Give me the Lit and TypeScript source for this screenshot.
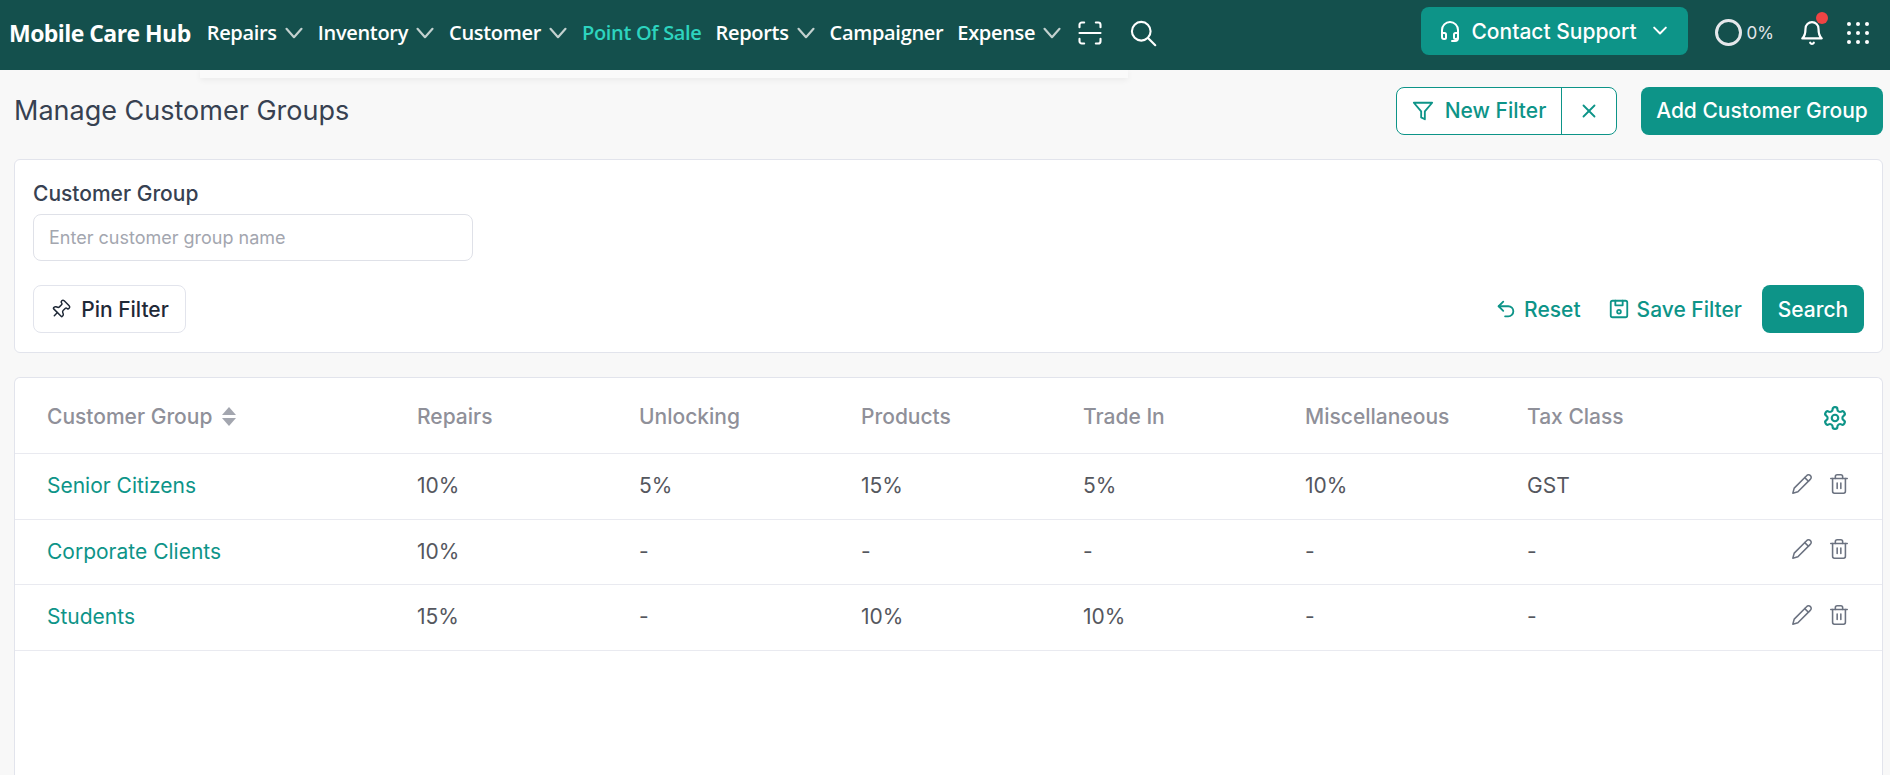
import { LitElement, html, css, svg } from "lit";
import { customElement } from "lit/decorators.js";

const ic = (cls: string, body: unknown, sw = 2) => html`<svg class=${cls} viewBox="0 0 24 24" fill="none" stroke="currentColor" stroke-width=${sw} stroke-linecap="round" stroke-linejoin="round">${body}</svg>`;
const chevron = svg`<path d="m5 8 7 7 7-7"/>`;
const navChevron = svg`<path d="m3 7 9 10 9-10"/>`;
const pencil = svg`<path d="M17 3a2.85 2.83 0 1 1 4 4L7.5 20.5 2 22l1.5-5.5Z"/><path d="m15 5 4 4"/>`;
const trash = svg`<path d="M3 6h18"/><path d="M19 6v14c0 1-1 2-2 2H7c-1 0-2-1-2-2V6"/><path d="M8 6V4c0-1 1-2 2-2h4c1 0 2 1 2 2v2"/><path d="M10 11v6"/><path d="M14 11v6"/>`;
const gear = svg`<path d="M12.22 2h-.44a2 2 0 0 0-2 2v.18a2 2 0 0 1-1 1.73l-.43.25a2 2 0 0 1-2 0l-.15-.08a2 2 0 0 0-2.73.73l-.22.38a2 2 0 0 0 .73 2.73l.15.1a2 2 0 0 1 1 1.72v.51a2 2 0 0 1-1 1.74l-.15.09a2 2 0 0 0-.73 2.73l.22.38a2 2 0 0 0 2.73.73l.15-.08a2 2 0 0 1 2 0l.43.25a2 2 0 0 1 1 1.73V20a2 2 0 0 0 2 2h.44a2 2 0 0 0 2-2v-.18a2 2 0 0 1 1-1.73l.43-.25a2 2 0 0 1 2 0l.15.08a2 2 0 0 0 2.73-.73l.22-.39a2 2 0 0 0-.73-2.73l-.15-.08a2 2 0 0 1-1-1.74v-.5a2 2 0 0 1 1-1.74l.15-.09a2 2 0 0 0 .73-2.73l-.22-.38a2 2 0 0 0-2.73-.73l-.15.08a2 2 0 0 1-2 0l-.43-.25a2 2 0 0 1-1-1.73V4a2 2 0 0 0-2-2z"/><circle cx="12" cy="12" r="3"/>`;

const NAV: [string, boolean, boolean?][] = [
  ["Repairs", true], ["Inventory", true], ["Customer", true], ["Point Of Sale", false, true],
  ["Reports", true], ["Campaigner", false], ["Expense", true],
];
const COLS = ["Repairs", "Unlocking", "Products", "Trade In", "Miscellaneous", "Tax Class"];
const ROWS = [
  ["Senior Citizens", "10%", "5%", "15%", "5%", "10%", "GST"],
  ["Corporate Clients", "10%", "-", "-", "-", "-", "-"],
  ["Students", "15%", "-", "10%", "10%", "-", "-"],
];

@customElement("app-root")
export class AppRoot extends LitElement {
  static styles = css`
    :host { display: flex; flex-direction: column; height: 775px; overflow: hidden; position: relative; background: #f8f8f8; font-family: Inter, "Liberation Sans", sans-serif; color: #374151; }
    * { box-sizing: border-box; }
    svg { display: block; flex: none; }
    .top { height: 70px; flex: none; background: #14504d; color: #fff; display: flex; align-items: center; padding: 0 21px 5px 9px; font-family: "Open Sans", "Noto Sans", sans-serif; position: relative; z-index: 2; }
    .logo { font-size: 23px; font-weight: 700; margin-right: 16px; letter-spacing: -0.55px; }
    .nav { display: flex; align-items: center; gap: 14px; font-size: 20px; font-weight: 600; letter-spacing: -0.32px; }
    .nav-item { display: flex; align-items: center; gap: 7px; white-space: nowrap; }
    .nav-item.on { color: #2dd4bf; }
    .ch { width: 20px; height: 20px; color: #c3d1cf; }
    .scan { width: 28px; height: 28px; }
    .srch { width: 28px; height: 28px; margin-left: 25px; }
    .right { margin-left: auto; display: flex; align-items: center; }
    .support { width: 267px; height: 48px; margin-bottom: 3px; border-radius: 8px; background: #0d9488; display: flex; align-items: center; justify-content: center; gap: 9px; font-size: 21px; font-weight: 500; font-family: Inter, sans-serif; }
    .support .hd { width: 24px; height: 24px; }
    .support .cv { width: 20px; height: 20px; margin-left: 4px; }
    .ring { width: 27px; height: 27px; border-radius: 50%; border: 3px solid #e5e7eb; margin-left: 27px; }
    .pct { font-size: 17px; margin-left: 5px; color: #e5e7eb; font-family: Inter, sans-serif; }
    .bell-wrap { position: relative; margin-left: 25px; width: 26px; height: 26px; }
    .bell { width: 26px; height: 26px; }
    .dot { position: absolute; width: 12px; height: 12px; top: -8px; right: -3px; background: #ef4444; border-radius: 50%; }
    .apps { display: grid; grid-template-columns: repeat(3, 4px); gap: 5px; margin-left: 22px; }
    .apps i { width: 4px; height: 4px; background: #fff; border-radius: 50%; }
    .ghost { position: absolute; left: 200px; top: 70px; width: 928px; height: 8px; background: #fafafa; box-shadow: 0 2px 6px rgba(0, 0, 0, .06); z-index: 1; }
    .main { flex: 1; display: flex; flex-direction: column; padding: 17px 7px 0 14px; min-height: 0; }
    .head { display: flex; align-items: center; height: 48px; flex: none; }
    h1 { margin: 0 0 2px; font-size: 27px; font-weight: 400; color: #374151; }
    .fbox { margin-left: auto; width: 221px; height: 48px; border: 1px solid #0d9488; border-radius: 8px; background: #fff; display: flex; color: #0d9488; font-size: 21px; font-weight: 500; }
    .fbox .a { width: 165px; display: flex; align-items: center; justify-content: center; gap: 11px; padding-bottom: 1px; border-right: 1px solid #0d9488; }
    .fbox .b { flex: 1; display: flex; align-items: center; justify-content: center; }
    .i22 { width: 22px; height: 22px; }
    .btn { height: 48px; border-radius: 8px; background: #0d9488; color: #fff; font-size: 21px; font-weight: 500; display: flex; align-items: center; justify-content: center; }
    .add { width: 242px; margin-left: 24px; padding-bottom: 1px; }
    .card { background: #fff; border: 1px solid #e2e4ec; border-radius: 6px; }
    .filter { flex: none; margin-top: 24px; height: 194px; padding: 19px 18px; display: flex; flex-direction: column; }
    .label { font-size: 21px; font-weight: 500; line-height: 30px; color: #374151; }
    .input { width: 440px; height: 48px; margin-top: 5px; border: 1px solid #dfe1e8; border-radius: 8px; padding: 0 15px; display: flex; align-items: center; font-size: 18px; color: #a3a6af; }
    .bar { display: flex; align-items: center; margin-top: 24px; }
    .pin { width: 153px; height: 48px; border: 1px solid #e2e4ec; border-radius: 8px; display: flex; align-items: center; justify-content: center; gap: 10px; font-size: 21px; font-weight: 500; color: #1f2937; }
    .pin svg { width: 21px; height: 21px; transform: rotate(45deg); }
    .links { margin-left: auto; display: flex; align-items: center; color: #0d9488; font-size: 21px; font-weight: 500; }
    .link { display: flex; align-items: center; gap: 7px; margin-right: 27px; }
    .link.last { margin-right: 20px; }
    .search { width: 102px; }
    .tbl { flex: 1; margin-top: 24px; border-bottom: 0; border-radius: 6px 6px 0 0; }
    .row { display: grid; grid-template-columns: 370px repeat(6, 222px) 1fr; align-items: center; padding: 0 0 1px 32px; border-bottom: 1px solid #e9eaf0; height: 65.5px; font-size: 21px; color: #55575e; }
    .row.h { height: 76px; color: #8f9099; font-weight: 500; font-size: 21px; padding: 1px 0 0 32px; }
    .row .nm { color: #0d9488; font-weight: 400; }
    .sort { display: flex; align-items: center; gap: 10px; }
    .tri { display: flex; flex-direction: column; gap: 3px; }
    .tri i { width: 0; height: 0; border-left: 7px solid transparent; border-right: 7px solid transparent; }
    .tri i.u { border-bottom: 8px solid #a3a6af; }
    .tri i.d { border-top: 8px solid #a3a6af; }
    .act { display: flex; justify-content: flex-end; align-items: center; gap: 15px; padding-right: 32px; color: #6b7280; margin-top: -4px; }
    .act svg { width: 22px; height: 22px; }
    .act.g { color: #0d9488; padding-right: 34px; margin-top: 3px; }
    .act.g svg { width: 26px; height: 26px; }
  `;

  render() {
    return html`
      <div class="top">
        <div class="logo">Mobile Care Hub</div>
        <div class="nav">
          ${NAV.map(([t, c, on]) => html`<div class="nav-item ${on ? "on" : ""}">${t}${c ? ic("ch", navChevron, 2.6) : ""}</div>`)}
          ${ic("scan", svg`<path d="M3 7V5a2 2 0 0 1 2-2h2"/><path d="M17 3h2a2 2 0 0 1 2 2v2"/><path d="M21 17v2a2 2 0 0 1-2 2h-2"/><path d="M7 21H5a2 2 0 0 1-2-2v-2"/><path d="M3 12h18"/>`, 1.8)}
        </div>
        ${ic("srch", svg`<circle cx="10.5" cy="10.5" r="8"/><path d="m16.5 16.5 6 6"/>`, 1.8)}
        <div class="right">
          <div class="support">
            ${ic("hd", svg`<path d="M4 14h2.5a1.500 1.500 0 0 1 1.500 1.500v3A1.500 1.500 0 0 1 6.500 20H6a2 2 0 0 1-2-2v-7a8 8 0 0 1 16 0v7a2 2 0 0 1-2 2h-.5a1.500 1.500 0 0 1-1.500-1.500v-3a1.500 1.500 0 0 1 1.500-1.500H20"/><path d="M20 18v1a3 3 0 0 1-3 3h-3"/>`)}
            <span>Contact Support</span>
            ${ic("cv", chevron, 2.4)}
          </div>
          <div class="ring"></div><div class="pct">0%</div>
          <div class="bell-wrap">
            ${ic("bell", svg`<path d="M6 8a6 6 0 0 1 12 0c0 7 3 9 3 9H3s3-2 3-9"/><path d="M10.300 21a1.940 1.940 0 0 0 3.400 0"/>`, 2)}
            <div class="dot"></div>
          </div>
          <div class="apps">${Array.from({ length: 9 }, () => html`<i></i>`)}</div>
        </div>
      </div>
      <div class="ghost"></div>
      <div class="main">
        <div class="head">
          <h1>Manage Customer Groups</h1>
          <div class="fbox">
            <div class="a">${ic("i22", svg`<path d="M22 3H2l8 9.460V19l4 2v-8.540L22 3z"/>`)}New Filter</div>
            <div class="b">${ic("i22", svg`<path d="M18 6 6 18"/><path d="m6 6 12 12"/>`)}</div>
          </div>
          <div class="btn add">Add Customer Group</div>
        </div>
        <div class="card filter">
          <div class="label">Customer Group</div>
          <div class="input">Enter customer group name</div>
          <div class="bar">
            <div class="pin">
              ${ic("", svg`<path d="M12 17v5"/><path d="M9 10.760a2 2 0 0 1-1.110 1.790l-1.780.9A2 2 0 0 0 5 15.240V16a1 1 0 0 0 1 1h12a1 1 0 0 0 1-1v-.76a2 2 0 0 0-1.110-1.790l-1.780-.9A2 2 0 0 1 15 10.760V7a1 1 0 0 1 1-1 2 2 0 0 0 0-4H8a2 2 0 0 0 0 4 1 1 0 0 1 1 1z"/>`, 1.7)}
              Pin Filter
            </div>
            <div class="links">
              <div class="link">${ic("i22", svg`<path d="M9 14 4 9l5-5"/><path d="M4 9h10.500a5.500 5.500 0 0 1 5.500 5.500a5.500 5.500 0 0 1-5.500 5.500H11"/>`)}Reset</div>
              <div class="link last">${ic("i22", svg`<rect x="3" y="3" width="18" height="18" rx="2"/><path d="M8 3v5h8V3"/><circle cx="12" cy="15" r="2"/>`)}Save Filter</div>
              <div class="btn search">Search</div>
            </div>
          </div>
        </div>
        <div class="card tbl">
          <div class="row h">
            <div class="sort">Customer Group <span class="tri"><i class="u"></i><i class="d"></i></span></div>
            ${COLS.map((c) => html`<div>${c}</div>`)}
            <div class="act g">${ic("", gear)}</div>
          </div>
          ${ROWS.map((r) => html`<div class="row">
            <div class="nm">${r[0]}</div>
            ${r.slice(1).map((v) => html`<div>${v}</div>`)}
            <div class="act">${ic("", pencil, 1.7)}${ic("", trash, 1.7)}</div>
          </div>`)}
        </div>
      </div>
    `;
  }
}
